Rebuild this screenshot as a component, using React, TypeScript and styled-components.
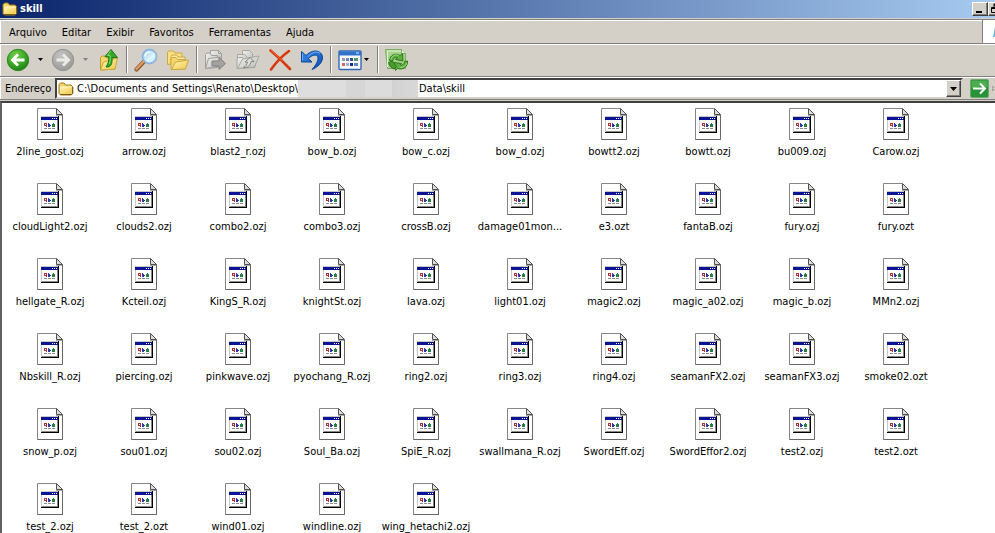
import React from "react";
import styled, { createGlobalStyle } from "styled-components";

const GlobalStyle = createGlobalStyle`
  * { box-sizing: border-box; }
  body {
    margin: 0;
    overflow: hidden;
    background: #fff;
    color: #000;
    font-family: Tahoma, "DejaVu Sans Condensed", "DejaVu Sans", sans-serif;
    font-size: 11px;
    line-height: 14px;
  }
  button, input { font: inherit; color: inherit; }
  svg { display: block; }
`;

const Window = styled.div`
  display: flex;
  flex-direction: column;
  height: 100vh;
  overflow: hidden;
  background: #d4d0c8;
`;

const TitleBar = styled.header`
  display: flex;
  align-items: center;
  flex: none;
  gap: 2px;
  height: 18px;
  padding-left: 2px;
  overflow: hidden;
  background: linear-gradient(90deg, #0a246a, #a6caf0);
`;

const Title = styled.h1`
  flex: 1;
  margin: 0;
  color: #fff;
  font-size: 11px;
  line-height: 16px;
`;

const CaptionButtons = styled.div`
  display: flex;
  flex: none;
  width: 23px;
  overflow: hidden;
`;

const CaptionButton = styled.button`
  flex: none;
  width: 16px;
  height: 14px;
  padding: 0;
  border: 1px solid;
  border-color: #fff #404040 #404040 #fff;
  background: #d4d0c8;
  box-shadow: inset -1px -1px #808080;
`;

const MenuRow = styled.div`
  display: flex;
  flex: none;
  height: 25px;
  margin-top: 1px;
  border-top: 1px solid #808080;
  border-bottom: 1px solid #808080;
  box-shadow: inset 0 1px #fff, inset 1px 0 #fff;
`;

const Menu = styled.nav`
  display: flex;
  flex: 1;
  align-items: center;
  padding: 2px 0 0 1px;
  border-right: 1px solid #808080;
`;

const MenuButton = styled.button`
  padding: 0 7px 0 8px;
  border: 0;
  background: none;
`;

const Brand = styled.div`
  display: flex;
  flex: none;
  justify-content: flex-end;
  align-items: center;
  width: 12px;
  background: #fff;
`;

const Toolbar = styled.div`
  display: flex;
  flex: none;
  align-items: center;
  height: 33px;
  padding: 0 0 2px 6px;
  border-top: 1px solid #fff;
  border-bottom: 1px solid #808080;
  box-shadow: inset 1px 0 #fff;
`;

const ToolButton = styled.button<{ $spaced?: boolean }>`
  width: 24px;
  height: 24px;
  margin-left: ${(p) => (p.$spaced ? 8 : 0)}px;
  padding: 0;
  border: 0;
  background: none;
`;

const DropButton = styled.button<{ $narrow?: boolean; $dim?: boolean }>`
  display: flex;
  justify-content: center;
  width: ${(p) => (p.$narrow ? 9 : 21)}px;
  padding: 0;
  border: 0;
  background: none;
  color: ${(p) => (p.$dim ? "#808080" : "#000")};
`;

const Separator = styled.div`
  width: 2px;
  height: 27px;
  margin: 0 6px;
  border-left: 1px solid #808080;
  border-right: 1px solid #fff;
`;

const AddressBar = styled.div`
  display: flex;
  flex: none;
  align-items: center;
  height: 23px;
  padding-left: 5px;
  border-top: 1px solid #fff;
  border-bottom: 1px solid #808080;
  box-shadow: inset 1px 0 #fff;
`;

const AddressLabel = styled.label`
  flex: none;
  width: 50px;
`;

const AddressBox = styled.div`
  display: flex;
  flex: 1;
  align-items: center;
  min-width: 0;
  height: 21px;
  padding-left: 1px;
  border: 2px solid;
  border-color: #404040 #d4d0c8 #d4d0c8 #404040;
  background: #fff;
`;

const PathInput = styled.input<{ $lead?: boolean }>`
  flex: ${(p) => (p.$lead ? "0 0 224px" : "1")};
  min-width: 0;
  height: 16px;
  padding: 0 0 0 ${(p) => (p.$lead ? 3 : 1)}px;
  border: 0;
  outline: 0;
  background: none;
`;

const HiddenPath = styled.div`
  flex: 0 0 120px;
  height: 17px;
  background: linear-gradient(90deg, #dedede 40%, #d6d6d6 40%, #d6d6d6 56%, #dcdcdc 56%, #dcdcdc 78%, #d2d2d2 78%, #d8d8d8);
`;

const ComboButton = styled.button`
  display: flex;
  align-items: center;
  justify-content: center;
  flex: none;
  width: 15px;
  height: 17px;
  padding: 0;
  border: 1px solid;
  border-color: #fff #404040 #404040 #fff;
  background: #d4d0c8;
  box-shadow: inset -1px -1px #808080;
`;

const GoArea = styled.div`
  display: flex;
  flex: none;
  align-items: center;
  gap: 3px;
  width: 32px;
  padding-left: 7px;
  overflow: hidden;
`;

const GoButton = styled.button`
  flex: none;
  width: 19px;
  height: 19px;
  padding: 0;
  border: 0;
  background: none;
`;

const Files = styled.main`
  flex: 1;
  min-height: 0;
  margin-top: 1px;
  padding: 5px 0 0 1px;
  overflow: hidden;
  border-top: 2px solid #404040;
  border-left: 2px solid #606060;
  background: #fff;
`;

const FileGrid = styled.ul`
  display: grid;
  grid-template-columns: repeat(auto-fill, 94px);
  grid-auto-rows: 75px;
  margin: 0;
  padding: 0;
  list-style: none;
`;

const FileItem = styled.li`
  display: flex;
  flex-direction: column;
  align-items: center;
  gap: 5px;
  white-space: nowrap;
`;

const files = [
  "2line_gost.ozj", "arrow.ozj", "blast2_r.ozj", "bow_b.ozj", "bow_c.ozj", "bow_d.ozj", "bowtt2.ozj", "bowtt.ozj", "bu009.ozj", "Carow.ozj",
  "cloudLight2.ozj", "clouds2.ozj", "combo2.ozj", "combo3.ozj", "crossB.ozj", "damage01mon...", "e3.ozt", "fantaB.ozj", "fury.ozj", "fury.ozt",
  "hellgate_R.ozj", "Kcteil.ozj", "KingS_R.ozj", "knightSt.ozj", "lava.ozj", "light01.ozj", "magic2.ozj", "magic_a02.ozj", "magic_b.ozj", "MMn2.ozj",
  "Nbskill_R.ozj", "piercing.ozj", "pinkwave.ozj", "pyochang_R.ozj", "ring2.ozj", "ring3.ozj", "ring4.ozj", "seamanFX2.ozj", "seamanFX3.ozj", "smoke02.ozt",
  "snow_p.ozj", "sou01.ozj", "sou02.ozj", "Soul_Ba.ozj", "SpiE_R.ozj", "swallmana_R.ozj", "SwordEff.ozj", "SwordEffor2.ozj", "test2.ozj", "test2.ozt",
  "test_2.ozj", "test_2.ozt", "wind01.ozj", "windline.ozj", "wing_hetachi2.ozj",
];

const menus = ["Arquivo", "Editar", "Exibir", "Favoritos", "Ferramentas", "Ajuda"];

const GradientSheet = styled.svg`
  position: absolute;
`;

const Gradients = () => (
  <GradientSheet width="0" height="0" aria-hidden="true">
    <defs>
      <radialGradient id="green" cx="0.4" cy="0.3" r="0.75">
        <stop offset="0" stopColor="#7ed04f" />
        <stop offset="0.6" stopColor="#3aa424" />
        <stop offset="1" stopColor="#1b7a14" />
      </radialGradient>
      <radialGradient id="grey" cx="0.4" cy="0.3" r="0.75">
        <stop offset="0" stopColor="#c4c4c2" />
        <stop offset="1" stopColor="#979795" />
      </radialGradient>
      <linearGradient id="folder" x1="0" y1="0" x2="1" y2="1">
        <stop offset="0" stopColor="#fff6b8" />
        <stop offset="1" stopColor="#efc84a" />
      </linearGradient>
      <linearGradient id="paper" x1="0" y1="0" x2="1" y2="1">
        <stop offset="0" stopColor="#f0f0ee" />
        <stop offset="1" stopColor="#bdbdba" />
      </linearGradient>
      <linearGradient id="lens" x1="0" y1="0" x2="1" y2="1">
        <stop offset="0" stopColor="#7cc4f4" />
        <stop offset="0.6" stopColor="#e4f7ff" />
        <stop offset="1" stopColor="#a8def8" />
      </linearGradient>
      <linearGradient id="blue" x1="0" y1="0" x2="1" y2="1">
        <stop offset="0" stopColor="#3a8ae8" />
        <stop offset="1" stopColor="#0c4cb0" />
      </linearGradient>
    </defs>
  </GradientSheet>
);

const FolderIcon = () => (
  <svg width="16" height="16" viewBox="0 0 16 16">
    <path d="M1 12.5V3.5L2.5 2H6l1.5 2H13l1.5 1.5v7L13 14H2.5z" fill="#f3d468" stroke="#9c7a1c" />
    <path d="M2 6.5h11v6H2z" fill="url(#folder)" />
    <path d="M2 6h11.5" stroke="#fffbd8" />
    <path d="M2 13.5h12l.8-1V6" fill="none" stroke="#7c5c10" />
  </svg>
);

const TriangleIcon = ({ wide }: { wide?: boolean }) =>
  wide ? (
    <svg width="7" height="4" viewBox="0 0 7 4"><path d="M0 0h7L3.5 4z" fill="currentColor" /></svg>
  ) : (
    <svg width="5" height="3" viewBox="0 0 5 3"><path d="M0 0h5L2.5 3z" fill="currentColor" /></svg>
  );

const BackIcon = () => (
  <svg width="24" height="24" viewBox="0 0 24 24">
    <circle cx="12" cy="12" r="10.7" fill="url(#green)" stroke="#2c8a20" />
    <path d="M18.5 12H7M12 6.5 6.5 12l5.5 5.5" fill="none" stroke="#fff" strokeWidth="2.8" />
  </svg>
);

const ForwardIcon = () => (
  <svg width="24" height="24" viewBox="0 0 24 24">
    <circle cx="12" cy="12" r="10.7" fill="url(#grey)" stroke="#92928f" />
    <path d="M5.500 12H17M12 6.500l5.500 5.500-5.500 5.500" fill="none" stroke="#ecebe8" strokeWidth="2.8" />
  </svg>
);

const UpIcon = () => (
  <svg width="24" height="24" viewBox="0 0 24 24">
    <path d="M4.500 22V9.500L6 8h3l1.500 2H19v11z" fill="#f5d970" stroke="#c49a2c" />
    <path d="m4.500 22 3-8 14-4-2.500 11z" fill="url(#folder)" stroke="#cfa638" />
    <path d="M10 19c5 .5 6.500-3 6-9.500H21.500L15 1.500 9 8.500l3.800.5c.2 4-.6 6.700-2.800 10z" fill="#35a82a" stroke="#157a18" strokeLinejoin="round" />
    <path d="m14.500 3-3 4.500h2.500c.6 3 .3 6-.7 8.500" fill="none" stroke="#83dc62" />
  </svg>
);

const SearchIcon = () => (
  <svg width="24" height="24" viewBox="0 0 24 24">
    <path d="m2.500 21.500 7.500-8" stroke="#8b5a34" strokeWidth="4.200" strokeLinecap="round" />
    <path d="m2.500 21 7-7.500" stroke="#dd9a63" strokeWidth="2.400" strokeLinecap="round" />
    <circle cx="15.500" cy="8.500" r="7" fill="url(#lens)" stroke="#8db7dc" strokeWidth="1.800" />
    <path d="M11 8c.4-2.500 2.400-4 4.800-4" fill="none" stroke="#fff" strokeWidth="1.600" strokeLinecap="round" />
  </svg>
);

const FoldersIcon = () => (
  <svg width="24" height="24" viewBox="0 0 24 24">
    <g stroke="#cfa844" strokeLinejoin="round">
      <path d="M1.500 16.500V4.500l1-1.500h5l1.500 2h7v9z" fill="#f7df82" />
      <path d="M5 17V8.500L6 7h4.500L12 9h7v9z" fill="#fbeb9e" />
      <path d="M5 21.500V11l1-1.500h4l1.500 2h8V21z" fill="#f5d76c" />
      <path d="m5.500 21.500 4-7.500 13-2-3 9z" fill="url(#folder)" />
    </g>
  </svg>
);

const MoveToIcon = () => (
  <svg width="24" height="24" viewBox="0 0 24 24">
    <g fill="url(#paper)" stroke="#a09f9b" strokeLinejoin="round">
      <path d="M6.500 11V2.500h8l3 3V15" />
      <path d="M14.500 2.500v3h3" fill="none" />
      <path d="M1.500 20.500V6.500L3 5h3l1.500 2.500h6v12z" />
      <path d="m1.500 20.500 3-10 13-1.500v9z" />
      <path d="M8 13h7V9.500l6.500 6-6.500 6v-3.500H8z" fill="#a3a3a1" stroke="#80807e" />
    </g>
  </svg>
);

const CopyToIcon = () => (
  <svg width="24" height="24" viewBox="0 0 24 24">
    <g fill="url(#paper)" stroke="#a7a6a2" strokeLinejoin="round">
      <path d="M6.500 11V2.500h7l3 3V13" />
      <path d="M1.500 12V6.500h7l3 3" />
      <path d="M1 20.500V11l1.500-1.500h4L8 11.500h11v8z" />
      <path d="m1.500 20.500 5-9.500 16.500-3-4.500 11z" />
      <path d="M7.500 19.500c4 .5 7-2 7.500-6h3l-4-4-5 4.500h2.500c-.5 2.500-1.500 4-4 5.500z" fill="#dededb" stroke="#83837f" />
    </g>
  </svg>
);

const DeleteIcon = () => (
  <svg width="24" height="24" viewBox="0 0 24 24">
    <path d="M2.500 2.500c6 5 12 10.500 19.500 18.500M21 3C14 8 8 14.500 3 21.500" fill="none" stroke="#d9360e" strokeWidth="2.600" strokeLinecap="round" />
    <path d="M3 2.500C8 7 11 9.500 14 12.500" fill="none" stroke="#f2683a" strokeLinecap="round" />
  </svg>
);

const UndoIcon = () => (
  <svg width="24" height="24" viewBox="0 0 24 24">
    <path d="M1.500 3.500v10.500H12L8.500 10.500c3-3 6-4 8-3 3 1.500 1.500 7.500-4.500 14 9-3.500 12.500-11 9.500-15.500-3-4.500-10-4-15.500 1.500z" fill="url(#blue)" stroke="#0b479e" strokeLinejoin="round" />
    <path d="M2.500 5.500v7M8 8.500c5-5 9.500-5.500 12-3" fill="none" stroke="#6eb0f6" />
  </svg>
);

const ViewsIcon = () => (
  <svg width="24" height="24" viewBox="0 0 24 24">
    <rect x="1" y="3" width="22" height="18.500" rx="1" fill="#fff" stroke="#2f69b5" strokeWidth="1.400" />
    <path d="M1 3.500h22v4H1z" fill="#2f72cc" />
    <path d="M18 5h3" stroke="#d8eaff" />
    <g>
      <path fill="#8e9cb4" d="M4 10h3v3H4z" /><path fill="#7384bb" d="M8 10h3v3H8z" /><path fill="#334ca8" d="M12 10h3v3h-3z" /><path fill="#559b68" d="M16 10h4v3h-4z" />
      <path fill="#d36a5a" d="M4 15h3v3H4z" /><path fill="#9caed4" d="M8 15h3v3H8z" /><path fill="#152c8c" d="M12 15h3v3h-3z" /><path fill="#5b87c8" d="M16 15h4v3h-4z" />
    </g>
  </svg>
);

const SyncIcon = () => (
  <svg width="24" height="24" viewBox="0 0 24 24">
    <path d="M.5 1.500h16l4 4v15H2.500z" fill="#a9d38d" stroke="#76ad61" />
    <path d="M2.500 3h13.500M2.500 3v16" stroke="#dff2d2" fill="none" />
    <path d="M16.500 1.500v4h4" fill="#eef8e6" stroke="#76ad61" />
    <g strokeLinejoin="round" stroke="#2f7a1c">
      <path d="M4.500 12.500C5 7 10.500 4.500 15 7.500l2.500-2 .5 7.500-7.500-1.500 2-1.500c-2.500-1-4.500.5-4.800 3z" fill="#5cae3e" />
      <path d="M22.500 13c.5 5.500-4.500 9.500-10 7.500l-2 2-1.500-8 7.500 1-1.500 1.500c2.500.8 4.500-.8 4.500-3.500z" fill="#5cae3e" />
      <path d="m3.500 14.500 4-1.500 4 5.500-2.500 2.500c-2.500-1-5-3-5.500-6.500z" fill="#4a9a30" />
    </g>
    <path d="M6 11.500c.5-3.500 4-5.500 7.500-4M21.500 15c-.5 3-3.500 5-7 4" fill="none" stroke="#a6dc84" />
  </svg>
);

const GoIcon = () => (
  <svg width="19" height="19" viewBox="0 0 19 19">
    <rect x=".5" y=".5" width="18" height="18" rx="1.500" fill="#299339" stroke="#6ba96b" />
    <path d="M1.500 1.500h16v7c-6-3-10 0-16 1z" fill="#4cac50" />
    <path d="M3 9.500h12M10 4.500l5 5-5 5" fill="none" stroke="#fff" strokeWidth="2" />
  </svg>
);

const FileIcon = () => (
  <svg width="26" height="32" viewBox="0 0 26 32" aria-hidden="true">
    <path d="M.5.5h18.500l6.500 6.500v24.500H.5z" fill="#fff" stroke="#858585" />
    <path d="M25.500 7v24.500H.5" fill="none" stroke="#686868" />
    <path d="M19.500.5v6h6z" fill="#dcdcdc" stroke="#505050" />
    <path d="M19 7.500h6" stroke="#a8a8a8" />
    <path d="M4 8h17v16H4z" fill="#c9cbc4" />
    <path d="M5 12h15v11H5z" fill="#fff" />
    <path d="M21.500 8v17M4 24.500h18" stroke="#000" />
    <path d="M20.500 12v12M5 23.500h15" stroke="#8a8a80" />
    <path d="M4 9h17v3H4z" fill="#0a1296" />
    <path d="M15 10h1v1h-1zM17 10h1v1h-1zM19 10h1v1h-1z" fill="#fff" />
    <path d="M7 15h3v4H9v-1H7z" fill="#b03038" />
    <path d="M8 16h1v1H8z" fill="#fff" />
    <path d="M11 15h1v1h1v1h1v1h-1v1h-2z" fill="#2a3aa8" />
    <path d="M16 15h1v1h1v3h-3v-3h1z" fill="#248044" />
    <path d="M7 20.500h3M11 20.500h3M15 20.500h3" stroke="#8a8a94" />
  </svg>
);

export default function App() {
  return (
    <Window>
      <GlobalStyle />
      <Gradients />
      <TitleBar>
        <FolderIcon />
        <Title>skill</Title>
        <CaptionButtons>
          <CaptionButton aria-label="Minimizar">
            <svg width="14" height="12" viewBox="0 0 14 12"><path d="M3 8h6v2H3z" /></svg>
          </CaptionButton>
          <CaptionButton aria-label="Restaurar">
            <svg width="14" height="12" viewBox="0 0 14 12"><path d="M5 1h6v6H9M5 1v3M5 2h6M2.500 4.500h6v5h-6zM2 5.500h6" fill="none" stroke="#000" /></svg>
          </CaptionButton>
        </CaptionButtons>
      </TitleBar>
      <MenuRow>
        <Menu>
          {menus.map((name) => <MenuButton key={name}>{name}</MenuButton>)}
        </Menu>
        <Brand>
          <svg width="2" height="10" viewBox="0 0 2 10"><path d="M2 0 0 10h2z" fill="#68b4e8" /></svg>
        </Brand>
      </MenuRow>
      <Toolbar role="toolbar">
        <ToolButton aria-label="Voltar"><BackIcon /></ToolButton>
        <DropButton aria-label="Histórico anterior"><TriangleIcon /></DropButton>
        <ToolButton aria-label="Avançar" disabled><ForwardIcon /></ToolButton>
        <DropButton aria-label="Histórico seguinte" disabled $dim><TriangleIcon /></DropButton>
        <ToolButton aria-label="Acima"><UpIcon /></ToolButton>
        <Separator />
        <ToolButton aria-label="Pesquisar"><SearchIcon /></ToolButton>
        <ToolButton aria-label="Pastas" $spaced><FoldersIcon /></ToolButton>
        <Separator />
        <ToolButton aria-label="Mover para" disabled><MoveToIcon /></ToolButton>
        <ToolButton aria-label="Copiar para" disabled $spaced><CopyToIcon /></ToolButton>
        <ToolButton aria-label="Excluir" $spaced><DeleteIcon /></ToolButton>
        <ToolButton aria-label="Desfazer" $spaced><UndoIcon /></ToolButton>
        <Separator />
        <ToolButton aria-label="Modos de exibição"><ViewsIcon /></ToolButton>
        <DropButton aria-label="Escolher modo" $narrow><TriangleIcon /></DropButton>
        <Separator />
        <ToolButton aria-label="Sincronizar"><SyncIcon /></ToolButton>
      </Toolbar>
      <AddressBar>
        <AddressLabel htmlFor="address">Endereço</AddressLabel>
        <AddressBox>
          <FolderIcon />
          <PathInput id="address" $lead defaultValue={"C:\\Documents and Settings\\Renato\\Desktop\\"} />
          <HiddenPath />
          <PathInput aria-label="Subpasta" defaultValue={"Data\\skill"} />
          <ComboButton aria-label="Abrir lista de endereços"><TriangleIcon wide /></ComboButton>
        </AddressBox>
        <GoArea>
          <GoButton aria-label="Ir"><GoIcon /></GoButton>
          <svg width="6" height="9" viewBox="0 0 6 9"><path d="m1 0 2 2-2 2M1 5l2 2-2 2" fill="none" stroke="#000" /></svg>
        </GoArea>
      </AddressBar>
      <Files>
        <FileGrid>
          {files.map((name) => (
            <FileItem key={name}><FileIcon /><span>{name}</span></FileItem>
          ))}
        </FileGrid>
      </Files>
    </Window>
  );
}
